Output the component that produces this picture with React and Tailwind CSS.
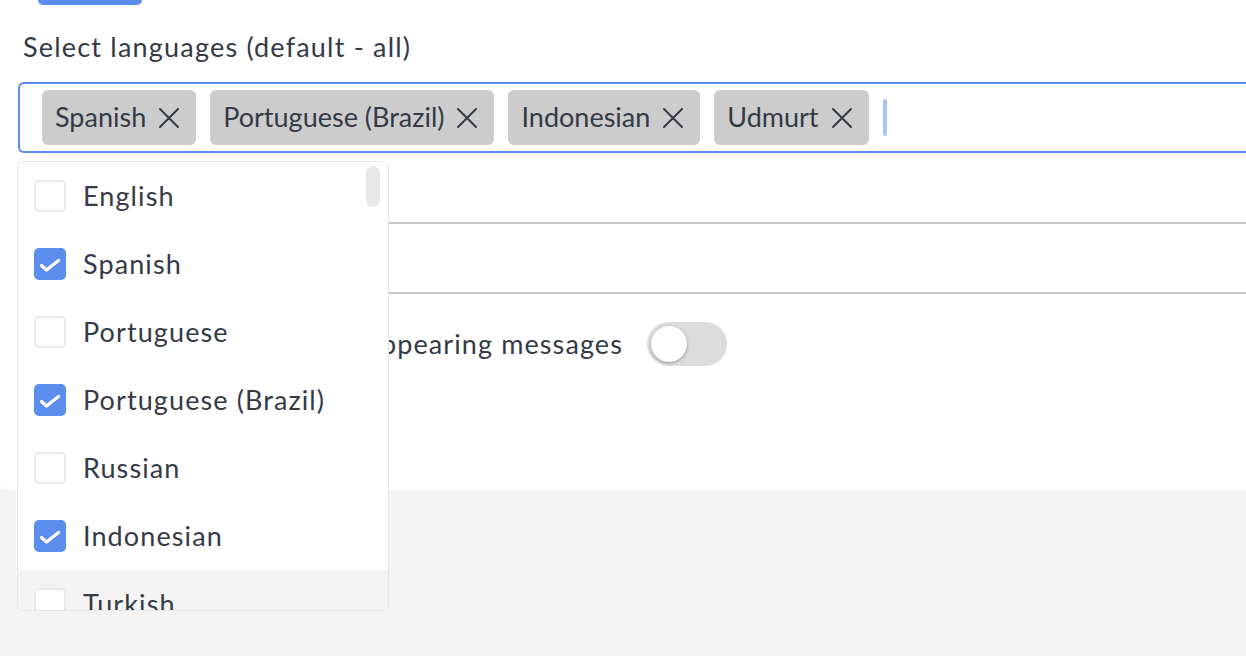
import React from "react";

const TEXT = "text-[#343a46]";

function XIcon() {
  return (
    <svg width="22" height="22" viewBox="0 0 22 22" className="shrink-0">
      <path d="M2 2 L20 20 M20 2 L2 20" stroke="#343a46" strokeWidth="2" strokeLinecap="round" />
    </svg>
  );
}

function Tag({ label }) {
  return (
    <div className="flex items-center h-[55px] pl-[13px] pr-[16px] gap-[12px] bg-[#cccccc] rounded-[6px]">
      <span>{label}</span>
      <XIcon />
    </div>
  );
}

function Checkbox({ checked }) {
  if (checked) {
    return (
      <div className="w-[32px] h-[32px] rounded-[5px] bg-[#5b8def] shrink-0">
        <svg width="32" height="32" viewBox="0 0 32 32">
          <path d="M7.5 17.5 L12.5 22 L24.5 12.5" stroke="white" strokeWidth="3.2" fill="none" strokeLinecap="round" strokeLinejoin="round" />
        </svg>
      </div>
    );
  }
  return <div className="w-[32px] h-[32px] rounded-[5px] border-2 border-[#e9e9e9] bg-white shrink-0" />;
}

const items = [
  ["English", false],
  ["Spanish", true],
  ["Portuguese", false],
  ["Portuguese (Brazil)", true],
  ["Russian", false],
  ["Indonesian", true],
  ["Turkish", false],
];

export default function App() {
  return (
    <div className={`relative w-[1246px] h-[656px] overflow-hidden bg-[#f4f4f4] ${TEXT} font-['Lato',sans-serif] text-[27px]`}>
      <div className="bg-white h-[490px] rounded-bl-[6px] flex flex-col">
        <div className="ml-[38px] w-[104px] h-[5px] bg-[#5b8def] rounded-b-full" />
        <div className="ml-[23px] mt-[26px] leading-[32px] tracking-[1.2px]">Select languages (default - all)</div>
        <div className="ml-[18px] mt-[19px] w-[1240px] h-[71px] border-2 border-r-0 border-[#5b8def] rounded-l-[6px] flex items-center pl-[22px] gap-[14px]">
          <Tag label="Spanish" />
          <Tag label="Portuguese (Brazil)" />
          <Tag label="Indonesian" />
          <Tag label="Udmurt" />
          <div className="w-[4px] h-[37px] rounded-full bg-[#a8c5f7]" />
        </div>
        <div className="ml-[18px] h-[71px] border-b-2 border-[#c6c6c6]" />
        <div className="ml-[18px] h-[70px] border-b-2 border-[#c6c6c6]" />
        <div className="ml-[18px] h-[100px] flex items-center">
          <span className="w-[605px] text-right tracking-[1.1px]">Disappearing messages</span>
          <div className="ml-[24px] relative w-[80px] h-[44px] rounded-full bg-[#dcdcdc]">
            <div className="absolute left-[4px] top-[4px] w-[36px] h-[36px] rounded-full bg-white shadow-[0_1px_3px_rgba(0,0,0,0.35)]" />
          </div>
        </div>
      </div>

      <div className="absolute left-[17px] top-[161px] w-[372px] h-[450px] border border-[#e6e6e6] rounded-[6px] bg-white overflow-hidden">
        {items.map(([label, checked], i) => (
          <div key={label} className={`flex items-center h-[68px] pl-[16px] gap-[17px] ${i === 6 ? "bg-[#f4f4f4]" : ""}`}>
            <Checkbox checked={checked} />
            <span className="tracking-[1.1px]">{label}</span>
          </div>
        ))}
        <div className="absolute right-[8px] top-[4px] w-[14px] h-[41px] rounded-full bg-[#e8e8e8]" />
      </div>
    </div>
  );
}
